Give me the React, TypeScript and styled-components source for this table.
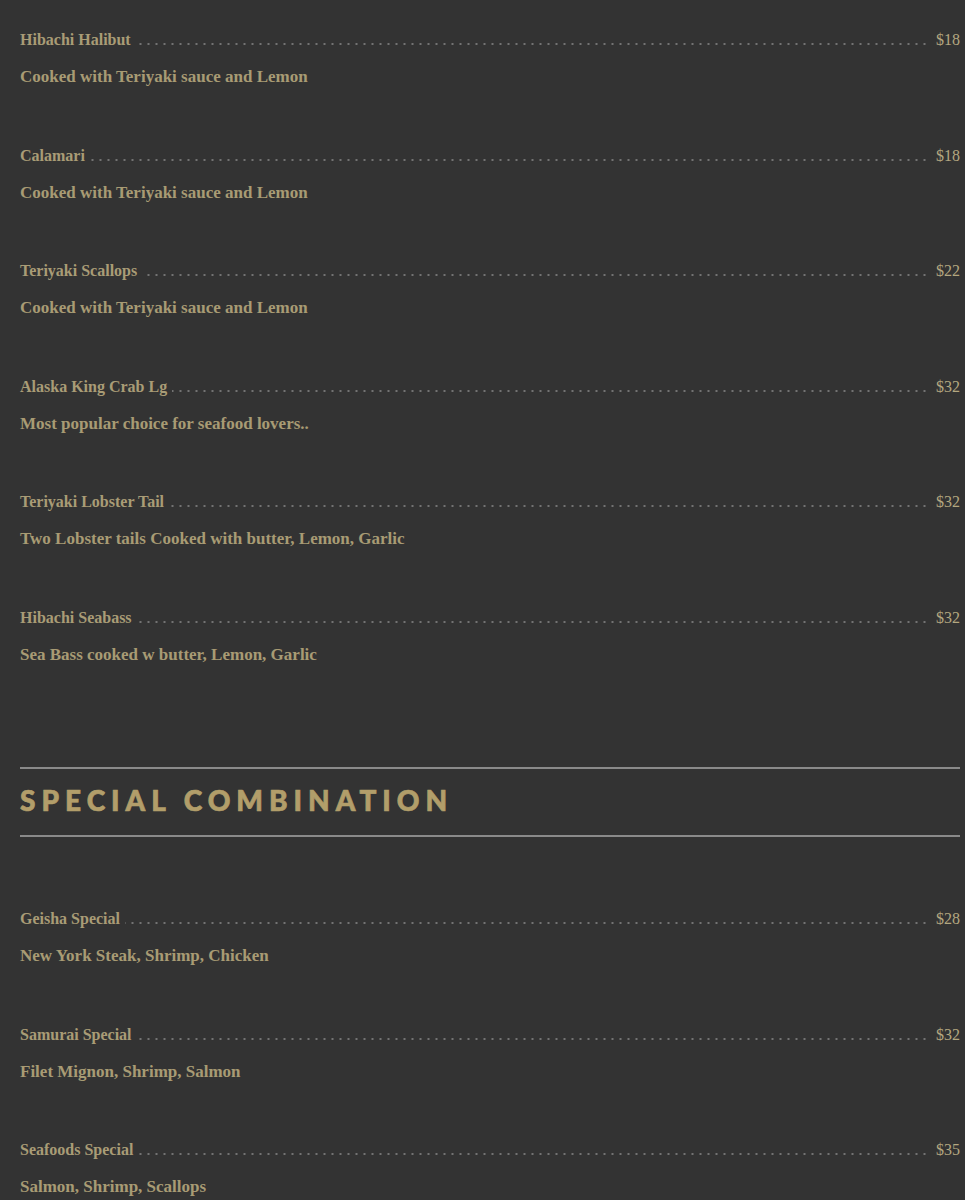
import React from "react";
import styled, { createGlobalStyle } from "styled-components";

const Global = createGlobalStyle`
  html, body { margin: 0; padding: 0; background: #333333; }
  body { font-family: "Liberation Serif", "Times New Roman", serif; }
`;

const Page = styled.div`
  background: #333333;
  padding: 30px 5px 40px 20px;
  min-height: 1200px;
  box-sizing: border-box;
`;

const Section = styled.section`
  display: flex;
  flex-direction: column;
  gap: 58.6px;
`;

const Item = styled.div`
  display: flex;
  flex-direction: column;
  gap: 17px;
`;

const Row = styled.div`
  display: flex;
  justify-content: space-between;
  height: 20px;
  line-height: 20px;
  background-image: radial-gradient(circle, #737373 1px, transparent 1.3px);
  background-size: 8px 4px;
  background-repeat: repeat-x;
  background-position: -3.5px 12px;
`;

const Name = styled.span`
  font-size: 16px;
  font-weight: 700;
  color: #a99c76;
  white-space: nowrap;
  background: #333333;
  padding-right: 5px;
`;

const Price = styled.span`
  font-size: 16px;
  color: #b3a780;
  white-space: nowrap;
  background: #333333;
  padding-left: 8px;
`;

const Desc = styled.div`
  font-size: 17px;
  font-weight: 700;
  line-height: 20px;
  height: 20px;
  color: #a89b74;
`;

const Header = styled.header`
  margin: 102px 0 72px;
  border-top: 2px solid #8a8a8a;
  border-bottom: 2px solid #8a8a8a;
  height: 66px;
  box-sizing: content-box;
  display: flex;
  align-items: center;
`;

const Title = styled.h2`
  margin: 0 0 4px;
  font-family: Lato, "Open Sans", sans-serif;
  font-weight: 900;
  font-size: 28px;
  line-height: 32px;
  letter-spacing: 6px;
  color: #b29e6a;
  text-transform: uppercase;
  -webkit-text-stroke: 0.7px #b29e6a;
`;

type Dish = { name: string; price: string; desc: string };

const seafood: Dish[] = [
  { name: "Hibachi Halibut", price: "$18", desc: "Cooked with Teriyaki sauce and Lemon" },
  { name: "Calamari", price: "$18", desc: "Cooked with Teriyaki sauce and Lemon" },
  { name: "Teriyaki Scallops", price: "$22", desc: "Cooked with Teriyaki sauce and Lemon" },
  { name: "Alaska King Crab Lg", price: "$32", desc: "Most popular choice for seafood lovers.." },
  { name: "Teriyaki Lobster Tail", price: "$32", desc: "Two Lobster tails Cooked with butter, Lemon, Garlic" },
  { name: "Hibachi Seabass", price: "$32", desc: "Sea Bass cooked w butter, Lemon, Garlic" },
];

const specials: Dish[] = [
  { name: "Geisha Special", price: "$28", desc: "New York Steak, Shrimp, Chicken" },
  { name: "Samurai Special", price: "$32", desc: "Filet Mignon, Shrimp, Salmon" },
  { name: "Seafoods Special", price: "$35", desc: "Salmon, Shrimp, Scallops" },
];

const MenuItem = ({ d }: { d: Dish }) => (
  <Item>
    <Row>
      <Name>{d.name}</Name>
      <Price>{d.price}</Price>
    </Row>
    <Desc>{d.desc}</Desc>
  </Item>
);

export default function App() {
  return (
    <Page>
      <Global />
      <Section>
        {seafood.map((d) => (
          <MenuItem key={d.name} d={d} />
        ))}
      </Section>
      <Header>
        <Title>Special Combination</Title>
      </Header>
      <Section>
        {specials.map((d) => (
          <MenuItem key={d.name} d={d} />
        ))}
      </Section>
    </Page>
  );
}
